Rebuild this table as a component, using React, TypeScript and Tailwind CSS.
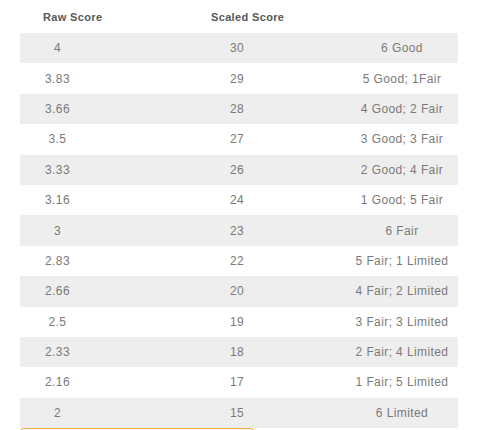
import React from "react";

const rows: [string, string, string][] = [
  ["4", "30", "6 Good"],
  ["3.83", "29", "5 Good; 1Fair"],
  ["3.66", "28", "4 Good; 2 Fair"],
  ["3.5", "27", "3 Good; 3 Fair"],
  ["3.33", "26", "2 Good; 4 Fair"],
  ["3.16", "24", "1 Good; 5 Fair"],
  ["3", "23", "6 Fair"],
  ["2.83", "22", "5 Fair; 1 Limited"],
  ["2.66", "20", "4 Fair; 2 Limited"],
  ["2.5", "19", "3 Fair; 3 Limited"],
  ["2.33", "18", "2 Fair; 4 Limited"],
  ["2.16", "17", "1 Fair; 5 Limited"],
  ["2", "15", "6 Limited"],
];

export default function App() {
  return (
    <div
      className="w-[478px] h-[430px] overflow-hidden bg-white px-[20px]"
      style={{ fontFamily: '"Liberation Sans", Arial, sans-serif' }}
    >
      <div className="grid grid-cols-[168px_auto] h-[33px] pl-[23px] pt-[12px] text-[11px] font-bold tracking-[0.35px] text-[#585858] leading-none">
        <div>Raw Score</div>
        <div>Scaled Score</div>
      </div>
      <div className="flex flex-col">
        {rows.map((r, i) => (
          <div
            key={i}
            className={`grid grid-cols-[75px_284px_46px] h-[30.4px] items-center text-[12px] tracking-[0.4px] text-[#7a7a7a] ${
              i % 2 === 0 ? "bg-[#eeeeee]" : "bg-white"
            }`}
          >
            <div className="flex justify-center whitespace-nowrap">{r[0]}</div>
            <div className="flex justify-center whitespace-nowrap">{r[1]}</div>
            <div className="flex justify-center whitespace-nowrap">{r[2]}</div>
          </div>
        ))}
      </div>
      <div className="w-[234px] h-[10px] border-t border-x border-[#f0a53a] rounded-t-[4px]" />
    </div>
  );
}
